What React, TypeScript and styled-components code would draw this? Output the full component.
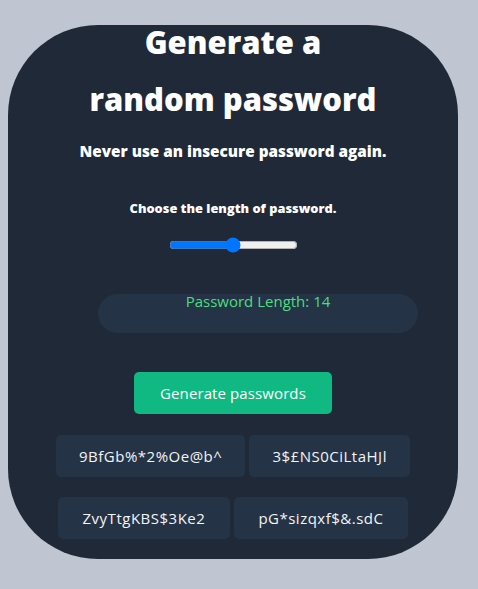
import React, { useState } from 'react';
import styled, { createGlobalStyle } from 'styled-components';

const GlobalStyle = createGlobalStyle`
  body {
    margin: 0;
    background: #bfc6d1;
    font-family: 'Open Sans', 'Liberation Sans', sans-serif;
  }
`;

const passwords = [
  ['9BfGb%*2%Oe@b^', '3$£NS0CiLtaHJl'],
  ['ZvyTtgKBS$3Ke2', 'pG*sizqxf$&.sdC'],
];

const App: React.FC = () => {
  const [length, setLength] = useState(14);

  return (
    <>
      <GlobalStyle />
      <StyledPage>
        <StyledCard>
          <StyledTitle>
            Generate a
            <br />
            random password
          </StyledTitle>
          <StyledSubtitle>Never use an insecure password again.</StyledSubtitle>
          <StyledLabel>Choose the length of password.</StyledLabel>
          <StyledRange
            type="range"
            min={6}
            max={22}
            value={length}
            onChange={(e) => setLength(Number(e.target.value))}
          />
          <StyledLengthPill>Password Length: {length}</StyledLengthPill>
          <StyledButton>Generate passwords</StyledButton>
          <StyledResults>
            {passwords.map((row, i) => (
              <StyledResultRow key={i} wide={i === 0}>
                {row.map((pw) => (
                  <StyledPassword key={pw}>{pw}</StyledPassword>
                ))}
              </StyledResultRow>
            ))}
          </StyledResults>
        </StyledCard>
      </StyledPage>
    </>
  );
};

const StyledPage = styled.div`
  padding: 25px 20px 30px 8px;
`;

const StyledCard = styled.div`
  width: 450px;
  height: 534px;
  box-sizing: border-box;
  background: #1f2937;
  border-radius: 90px;
  display: flex;
  flex-direction: column;
  align-items: center;
  color: #ffffff;
`;

const StyledTitle = styled.h1`
  margin: -11px 0 0 0;
  font-size: 31px;
  line-height: 57px;
  font-weight: 800;
  text-align: center;
`;

const StyledSubtitle = styled.p`
  margin: 13px 0 0 0;
  font-size: 15.3px;
  line-height: 20px;
  font-weight: 800;
`;

const StyledLabel = styled.p`
  margin: 39px 0 0 0;
  font-size: 12.8px;
  line-height: 16px;
  font-weight: 800;
`;

const StyledRange = styled.input`
  margin: 21px 0 0 0;
  width: 129px;
  height: 16px;
`;

const StyledLengthPill = styled.div`
  margin: 41px 0 0 50px;
  width: 320px;
  height: 39px;
  box-sizing: border-box;
  border-radius: 20px;
  background: #253346;
  color: #4ade80;
  font-size: 15px;
  line-height: 15px;
  text-align: center;
`;

const StyledButton = styled.button`
  margin-top: 39px;
  height: 42px;
  padding: 0 26px;
  border: none;
  border-radius: 5px;
  background: #10b981;
  color: #ffffff;
  font-family: inherit;
  font-size: 15px;
  letter-spacing: 0.1px;
`;

const StyledResults = styled.div`
  margin-top: 21px;
  display: flex;
  flex-direction: column;
  align-items: center;
  gap: 20px;
`;

const StyledResultRow = styled.div<{ wide: boolean }>`
  width: ${(props) => (props.wide ? 354 : 350)}px;
  display: flex;
  gap: 4px;
`;

const StyledPassword = styled.div`
  flex: 1 1 auto;
  height: 42px;
  padding: 0 16px;
  display: flex;
  align-items: center;
  justify-content: center;
  border-radius: 5px;
  background: #253346;
  color: #f3f4f6;
  font-size: 15px;
  letter-spacing: 0.5px;
`;

export default App;
